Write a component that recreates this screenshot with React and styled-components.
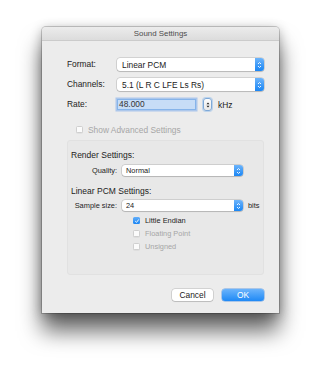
import styled, { createGlobalStyle } from "styled-components";

const GlobalStyle = createGlobalStyle`
  html, body {
    margin: 0;
    padding: 0;
    background: #ffffff;
  }
  body {
    font-family: "Liberation Sans", Arial, sans-serif;
    color: #222;
  }
`;

const Page = styled.div`
  padding: 27px 42px 60px 42px;
  width: 237px;
`;

const Window = styled.div`
  width: 237px;
  height: 286px;
  background: #ececec;
  border-radius: 4px 4px 0 0;
  box-shadow: 0 0 0 1px rgba(0, 0, 0, 0.18), 0 18px 22px rgba(0, 0, 0, 0.6),
    0 2px 12px rgba(0, 0, 0, 0.3);
  display: flex;
  flex-direction: column;
  overflow: hidden;
`;

const TitleBar = styled.div`
  height: 14px;
  flex: none;
  background: linear-gradient(#ececec, #dcdcdc);
  border-bottom: 1px solid #cbcbcb;
  box-sizing: border-box;
  display: flex;
  align-items: center;
  justify-content: center;
  font-size: 7.9px;
  color: #4c4c4c;
`;

const Body = styled.div`
  flex: 1;
  display: flex;
  flex-direction: column;
  padding: 17px 15px 12px 25px;
`;

const FormGrid = styled.div`
  display: grid;
  grid-template-columns: 50px 1fr;
  align-items: center;
  row-gap: 7px;
`;

const Label = styled.div`
  font-size: 8.4px;
  line-height: 13px;
`;

const Popup = styled.div`
  height: ${(p) => p.$h || 13}px;
  box-sizing: border-box;
  background: #fff;
  border-radius: 3px;
  box-shadow: 0 0 0 0.5px rgba(0, 0, 0, 0.22), 0 1px 1px rgba(0, 0, 0, 0.12);
  display: flex;
  align-items: center;
  font-size: ${(p) => (p.$small ? 7.4 : 8.4)}px;
  padding-left: ${(p) => (p.$small ? 4 : 5)}px;
  overflow: hidden;
`;

const PopupText = styled.span`
  flex: 1;
  white-space: nowrap;
`;

const PopupArrows = styled.div`
  width: 9px;
  height: 100%;
  background: linear-gradient(#6db4fb, #1a86f4);
  display: flex;
  align-items: center;
  justify-content: center;
`;

function Arrows() {
  return (
    <PopupArrows>
      <svg width="5" height="8" viewBox="0 0 5 8">
        <path
          d="M1 3 L2.5 1.5 L4 3 M1 5 L2.5 6.5 L4 5"
          fill="none"
          stroke="#fff"
          strokeWidth="0.9"
        />
      </svg>
    </PopupArrows>
  );
}

function PopUp({ value, h, small }) {
  return (
    <Popup $h={h} $small={small}>
      <PopupText>{value}</PopupText>
      <Arrows />
    </Popup>
  );
}

const RateRow = styled.div`
  display: flex;
  align-items: center;
`;

const RateField = styled.div`
  width: 79px;
  height: 11px;
  box-sizing: border-box;
  background: #c7ddf7;
  border: 1px solid #86b4ea;
  box-shadow: 0 0 0 1.5px rgba(120, 170, 235, 0.55);
  font-size: 8.4px;
  line-height: 9px;
  padding-left: 1px;
  color: #333;
`;

const Stepper = styled.div`
  margin-left: 7px;
  width: 9px;
  height: 13px;
  box-sizing: border-box;
  background: linear-gradient(#fdfdfd, #e8e8e8);
  border: 1px solid #7ea9d8;
  border-radius: 3px;
  box-shadow: 0 0 0 1px rgba(140, 185, 235, 0.5);
  display: flex;
  align-items: center;
  justify-content: center;
`;

const Unit = styled.span`
  font-size: ${(p) => (p.$small ? 7.4 : 8.4)}px;
  margin-left: ${(p) => p.$gap ?? 6}px;
`;

const CheckRow = styled.div`
  display: flex;
  align-items: center;
  height: 13px;
  gap: 5px;
  font-size: ${(p) => (p.$small ? 7.4 : 8.4)}px;
  color: ${(p) => (p.$disabled ? "#a6a6a6" : "#222")};
  padding-left: ${(p) => p.$indent || 0}px;
`;

const Box = styled.span`
  width: 7px;
  height: 7px;
  box-sizing: border-box;
  border-radius: 1.5px;
  flex: none;
  display: flex;
  align-items: center;
  justify-content: center;
  background: ${(p) => (p.$checked ? "linear-gradient(#63aef9, #1c86f3)" : "#fbfbfb")};
  border: ${(p) => (p.$checked ? "none" : "0.5px solid #cfcfcf")};
  box-shadow: ${(p) => (p.$checked ? "none" : "0 0.5px 0.5px rgba(0,0,0,0.08)")};
`;

function Check({ checked, label, disabled, small, indent }) {
  return (
    <CheckRow $disabled={disabled} $small={small} $indent={indent}>
      <Box $checked={checked}>
        {checked && (
          <svg width="6" height="6" viewBox="0 0 6 6">
            <path d="M1.2 3.1 L2.5 4.4 L4.8 1.4" fill="none" stroke="#fff" strokeWidth="0.9" />
          </svg>
        )}
      </Box>
      {label}
    </CheckRow>
  );
}

const AdvancedRow = styled.div`
  margin-top: 12px;
`;

const GroupBox = styled.div`
  margin-top: 4px;
  height: 135px;
  box-sizing: border-box;
  background: #e8e8e8;
  border: 1px solid #e1e1e1;
  border-radius: 3px;
  padding: 9px 4px 0 3px;
  display: flex;
  flex-direction: column;
`;

const GroupTitle = styled.div`
  font-size: 8.5px;
  line-height: 10px;
  margin-top: ${(p) => p.$mt || 0}px;
`;

const SubRow = styled.div`
  display: grid;
  grid-template-columns: 46px 121px auto;
  column-gap: 5px;
  align-items: center;
  margin-top: ${(p) => p.$mt || 0}px;
`;

const SubLabel = styled.div`
  font-size: 7.4px;
  text-align: right;
`;

const Checks = styled.div`
  margin-top: 3px;
  display: flex;
  flex-direction: column;
`;

const Buttons = styled.div`
  margin-top: auto;
  display: flex;
  justify-content: flex-end;
  gap: 9px;
`;

const Button = styled.div`
  height: 12px;
  width: ${(p) => p.$w}px;
  box-sizing: border-box;
  border-radius: 3px;
  display: flex;
  align-items: center;
  justify-content: center;
  font-size: 8.4px;
  background: ${(p) => (p.$primary ? "linear-gradient(#6cb4fb, #1f89f5)" : "#fff")};
  color: ${(p) => (p.$primary ? "#fff" : "#222")};
  box-shadow: ${(p) =>
    p.$primary
      ? "0 0 0 0.5px rgba(20,110,220,0.6)"
      : "0 0 0 0.5px rgba(0,0,0,0.22), 0 1px 1px rgba(0,0,0,0.1)"};
`;

export default function App() {
  return (
    <Page>
      <GlobalStyle />
      <Window>
        <TitleBar>Sound Settings</TitleBar>
        <Body>
          <FormGrid>
            <Label>Format:</Label>
            <PopUp value="Linear PCM" />
            <Label>Channels:</Label>
            <PopUp value="5.1 (L R C LFE Ls Rs)" />
            <Label>Rate:</Label>
            <RateRow>
              <RateField>48.000</RateField>
              <Stepper>
                <svg width="4" height="8" viewBox="0 0 4 8">
                  <path d="M0.5 3.2 L2 1.4 L3.5 3.2 Z M0.5 4.8 L2 6.6 L3.5 4.8 Z" fill="#222" />
                </svg>
              </Stepper>
              <Unit>kHz</Unit>
            </RateRow>
          </FormGrid>

          <AdvancedRow>
            <Check label="Show Advanced Settings" disabled indent={9} />
          </AdvancedRow>

          <GroupBox>
            <GroupTitle>Render Settings:</GroupTitle>
            <SubRow $mt={5}>
              <SubLabel>Quality:</SubLabel>
              <PopUp value="Normal" h={11} small />
            </SubRow>
            <GroupTitle $mt={10}>Linear PCM Settings:</GroupTitle>
            <SubRow $mt={4}>
              <SubLabel>Sample size:</SubLabel>
              <PopUp value="24" h={11} small />
              <Unit $small $gap={0}>bits</Unit>
            </SubRow>
            <Checks>
              <Check label="Little Endian" checked small indent={62} />
              <Check label="Floating Point" disabled small indent={62} />
              <Check label="Unsigned" disabled small indent={62} />
            </Checks>
          </GroupBox>

          <Buttons>
            <Button $w={41}>Cancel</Button>
            <Button $w={42} $primary>OK</Button>
          </Buttons>
        </Body>
      </Window>
    </Page>
  );
}
